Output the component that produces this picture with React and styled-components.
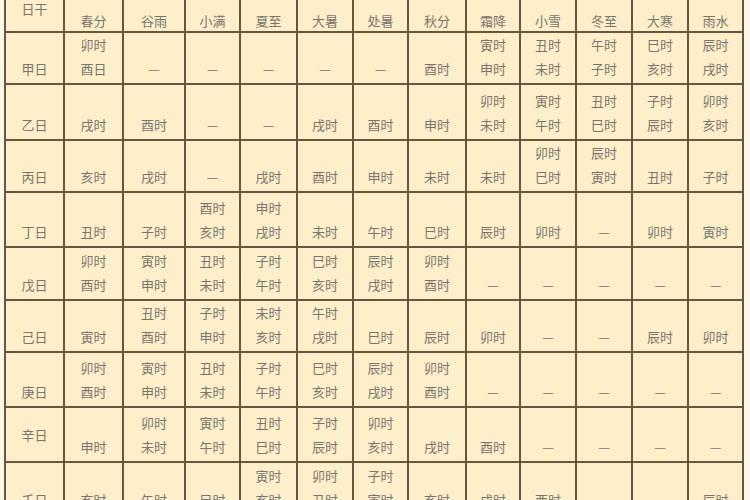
import React from "react";
import styled, { createGlobalStyle } from "styled-components";

const GlobalStyle = createGlobalStyle`
  html, body {
    margin: 0;
    padding: 0;
    background: #fbf6e8;
    overflow: hidden;
  }
`;

const Page = styled.div`
  width: 750px;
  height: 500px;
  overflow: hidden;
  padding-left: 4px;
  padding-top: 1px;
  box-sizing: border-box;
`;

const Table = styled.table`
  width: 738px;
  margin-top: -14px;
  table-layout: fixed;
  border-collapse: collapse;
  background: #fcefca;
  font-family: "Noto Sans CJK SC", "Noto Sans", sans-serif;
  font-size: 13px;
  color: #7a756c;
`;

const HeadRow = styled.tr`
  height: 44px;
`;

const Th = styled.th`
  border: 2px solid #66583f;
  font-weight: normal;
  line-height: 20px;
  text-align: center;
  vertical-align: ${(p) => (p.$top ? "top" : "bottom")};
  padding: ${(p) => (p.$top ? "10px 0 0" : "0")};
`;

const Td = styled.td`
  border: 2px solid #66583f;
  padding: 0 0 ${(p) => (p.$mid ? "0" : "2px")};
  text-align: center;
  vertical-align: ${(p) => (p.$mid ? "middle" : "bottom")};
  line-height: 24px;
`;

const Row = styled.tr`
  height: ${(p) => p.$h}px;
`;

const widths = [59, 59, 62, 55, 57, 56, 55, 58, 54, 56, 56, 56, 55];

const head = ["日干", "春分", "谷雨", "小满", "夏至", "大暑", "处暑", "秋分", "霜降", "小雪", "冬至", "大寒", "雨水"];

const D = "—";

const rows = [
  { h: 52, day: "甲日", cells: [["卯时", "酉日"], D, D, D, D, D, "酉时", ["寅时", "申时"], ["丑时", "未时"], ["午时", "子时"], ["巳时", "亥时"], ["辰时", "戌时"]] },
  { h: 56, day: "乙日", cells: ["戌时", "酉时", D, D, "戌时", "酉时", "申时", ["卯时", "未时"], ["寅时", "午时"], ["丑时", "巳时"], ["子时", "辰时"], ["卯时", "亥时"]] },
  { h: 52, day: "丙日", cells: ["亥时", "戌时", D, "戌时", "酉时", "申时", "未时", "未时", ["卯时", "巳时"], ["辰时", "寅时"], "丑时", "子时"] },
  { h: 55, day: "丁日", cells: ["丑时", "子时", ["酉时", "亥时"], ["申时", "戌时"], "未时", "午时", "巳时", "辰时", "卯时", D, "卯时", "寅时"] },
  { h: 53, day: "戊日", cells: [["卯时", "酉时"], ["寅时", "申时"], ["丑时", "未时"], ["子时", "午时"], ["巳时", "亥时"], ["辰时", "戌时"], ["卯时", "酉时"], D, D, D, D, D] },
  { h: 52, day: "己日", cells: ["寅时", ["丑时", "酉时"], ["子时", "申时"], ["未时", "亥时"], ["午时", "戌时"], "巳时", "辰时", "卯时", D, D, "辰时", "卯时"] },
  { h: 55, day: "庚日", cells: [["卯时", "酉时"], ["寅时", "申时"], ["丑时", "未时"], ["子时", "午时"], ["巳时", "亥时"], ["辰时", "戌时"], ["卯时", "酉时"], D, D, D, D, D] },
  { h: 55, day: "辛日", mid: true, cells: ["申时", ["卯时", "未时"], ["寅时", "午时"], ["丑时", "巳时"], ["子时", "辰时"], ["卯时", "亥时"], "戌时", "酉时", D, D, D, D] },
  { h: 53, day: "壬日", cells: ["亥时", "午时", "巳时", ["寅时", "亥时"], ["卯时", "丑时"], ["子时", "寅时"], "亥时", "戌时", "酉时", "", "", "辰时"] },
];

function Cell({ value, mid }) {
  const lines = Array.isArray(value) ? value : [value];
  return (
    <Td $mid={mid}>
      {lines.map((t, i) => (
        <React.Fragment key={i}>
          {i > 0 && <br />}
          {t}
        </React.Fragment>
      ))}
    </Td>
  );
}

export default function App() {
  return (
    <Page>
      <GlobalStyle />
      <Table>
        <colgroup>
          {widths.map((w, i) => (
            <col key={i} style={{ width: w }} />
          ))}
        </colgroup>
        <thead>
          <HeadRow>
            {head.map((h, i) => (
              <Th key={h} $top={i === 0}>
                {h}
              </Th>
            ))}
          </HeadRow>
        </thead>
        <tbody>
          {rows.map((r) => (
            <Row key={r.day} $h={r.h}>
              <Cell value={r.day} mid={r.mid} />
              {r.cells.map((c, i) => (
                <Cell key={i} value={c} />
              ))}
            </Row>
          ))}
        </tbody>
      </Table>
    </Page>
  );
}
